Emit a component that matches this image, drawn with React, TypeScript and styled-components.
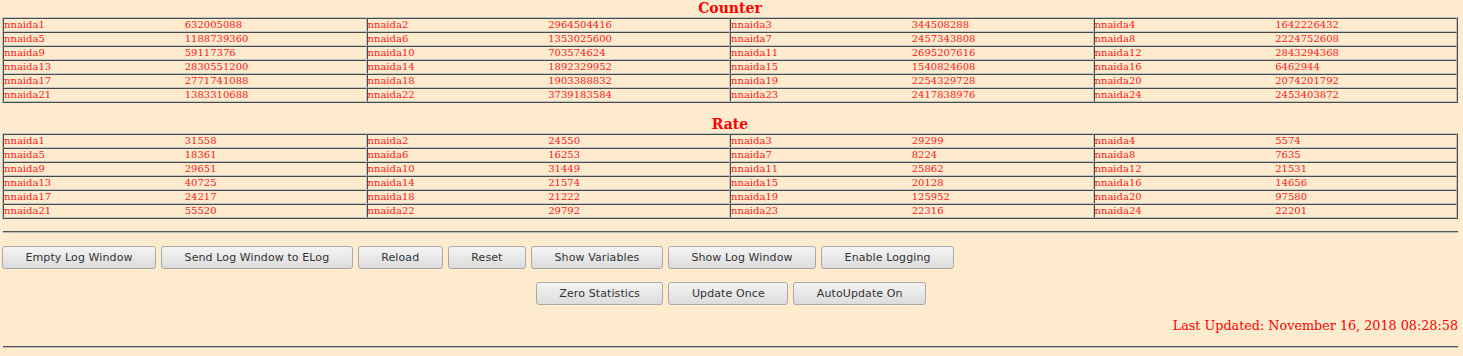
import styled, { createGlobalStyle } from "styled-components";

const GlobalStyle = createGlobalStyle`
  html, body {
    margin: 0;
    padding: 0;
    background: #ffebcd;
  }
`;

const Page = styled.div`
  padding: 0 5px 0 2px;
  font-family: "DejaVu Serif", serif;
  color: red;
`;

const Title = styled.div<{ $top?: number }>`
  margin-top: ${(p) => p.$top ?? 0}px;
  height: 17px;
  line-height: 17px;
  text-align: center;
  font-weight: bold;
  font-size: 14px;
`;

const StatTable = styled.table`
  width: 100%;
  border-collapse: separate;
  border-spacing: 0;
  border: 1px solid;
  border-color: #c4c4c4 #4a4a4a #4a4a4a #c4c4c4;
  table-layout: fixed;
`;

const Cell = styled.td`
  border: 1px solid;
  border-color: #4a4a4a #c4c4c4 #c4c4c4 #4a4a4a;
  padding: 0;
  height: 12px;
`;

const Pair = styled.div`
  display: grid;
  grid-template-columns: 1fr 1fr;
  font-size: 10px;
  line-height: 12px;
  white-space: nowrap;
  color: #ff2020;
`;

const Rule = styled.hr<{ $top: number }>`
  margin: ${(p) => p.$top}px 0 0 1px;
  border: 0;
  border-top: 1px solid #555;
  border-bottom: 1px solid #bbb;
  height: 0;
`;

const ButtonRow = styled.div<{ $center?: boolean; $top: number }>`
  display: flex;
  gap: 5px;
  justify-content: ${(p) => (p.$center ? "center" : "flex-start")};
  margin-top: ${(p) => p.$top}px;
  padding-left: ${(p) => (p.$center ? 2 : 0)}px;
`;

const Button = styled.button`
  height: 23px;
  padding: 0 22.5px;
  border: 1px solid #a9a9a9;
  border-radius: 3px;
  background: linear-gradient(#f4f4f4, #dcdcdc);
  font-family: "DejaVu Sans", sans-serif;
  font-size: 11px;
  letter-spacing: 0.1px;
  color: #333;
  cursor: pointer;
`;

const Updated = styled.div`
  margin-top: 13px;
  text-align: right;
  font-size: 12.75px;
  line-height: 16px;
`;

const counter = [
  632005088, 2964504416, 344508288, 1642226432, 1188739360, 1353025600,
  2457343808, 2224752608, 59117376, 703574624, 2695207616, 2843294368,
  2830551200, 1892329952, 1540824608, 6462944, 2771741088, 1903388832,
  2254329728, 2074201792, 1383310688, 3739183584, 2417838976, 2453403872,
];

const rate = [
  31558, 24550, 29299, 5574, 18361, 16253, 8224, 7635, 29651, 31449, 25862,
  21531, 40725, 21574, 20128, 14656, 24217, 21222, 125952, 97580, 55520,
  29792, 22316, 22201,
];

function Stats({ values }: { values: number[] }) {
  const rows = [0, 1, 2, 3, 4, 5];
  return (
    <StatTable>
      <tbody>
        {rows.map((r) => (
          <tr key={r}>
            {[0, 1, 2, 3].map((c) => {
              const i = r * 4 + c;
              return (
                <Cell key={c}>
                  <Pair>
                    <span>nnaida{i + 1}</span>
                    <span>{values[i]}</span>
                  </Pair>
                </Cell>
              );
            })}
          </tr>
        ))}
      </tbody>
    </StatTable>
  );
}

export default function App() {
  return (
    <Page>
      <GlobalStyle />
      <Title>Counter</Title>
      <Stats values={counter} />
      <Title $top={13}>Rate</Title>
      <Stats values={rate} />
      <Rule $top={12} />
      <ButtonRow $top={13}>
        <Button>Empty Log Window</Button>
        <Button>Send Log Window to ELog</Button>
        <Button>Reload</Button>
        <Button>Reset</Button>
        <Button>Show Variables</Button>
        <Button>Show Log Window</Button>
        <Button>Enable Logging</Button>
      </ButtonRow>
      <ButtonRow $center $top={13}>
        <Button>Zero Statistics</Button>
        <Button>Update Once</Button>
        <Button>AutoUpdate On</Button>
      </ButtonRow>
      <Updated>Last Updated: November 16, 2018 08:28:58</Updated>
      <Rule $top={12} />
    </Page>
  );
}
